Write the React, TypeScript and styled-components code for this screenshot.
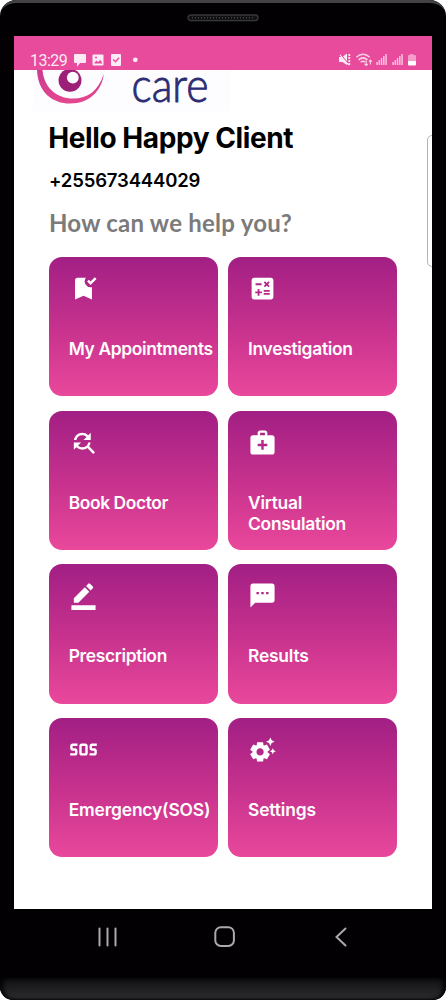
import React from 'react';
import styled, { createGlobalStyle } from 'styled-components';
import type { IconType } from 'react-icons';
import {
  MdBookmarkAdded,
  MdCalculate,
  MdFindReplace,
  MdMedicalServices,
  MdBorderColor,
  MdSms,
  MdSos,
  MdSettingsSuggest,
} from 'react-icons/md';

const GlobalStyle = createGlobalStyle`
  * { box-sizing: border-box; }
  body { margin: 0; background: #fff; font-family: Inter, "Liberation Sans", sans-serif; }
`;

const Phone = styled.div`
  width: 446px;
  height: 1000px;
  display: flex;
  flex-direction: column;
  background: #020003;
  border-radius: 16px 16px 13px 13px;
  overflow: hidden;
`;

const TopBezel = styled.div`
  height: 36px;
  flex: none;
  display: flex;
  justify-content: center;
  padding-top: 11px;
  border-top: 3px solid #434345;
  border-radius: 16px 16px 0 0;
`;

const Speaker = styled.svg`
  display: block;
`;

const Screen = styled.div`
  position: relative;
  width: 418px;
  height: 872.5px;
  margin-left: 14px;
  flex: none;
  background: #fff;
  overflow: hidden;
`;

const StatusBar = styled.div`
  height: 34px;
  background: #e84a9c;
  display: flex;
  justify-content: space-between;
  padding: 15px 14px 0 16px;
  color: #fff;
`;

const Clock = styled.span`
  font: 400 16px/19px Roboto, sans-serif;
  width: 43px;
  letter-spacing: -0.55px;
  color: #fdeaf4;
`;

const StatusGroup = styled.div`
  display: flex;
`;

const Logo = styled.svg`
  display: block;
  margin-left: 19px;
  overflow: visible;
`;

const Content = styled.main`
  padding: 0 35px;
`;

const Greeting = styled.h1`
  margin: 9.6px 0 0;
  font-size: 28px;
  line-height: 34px;
  font-weight: 700;
  letter-spacing: -0.42px;
  margin-left: -0.7px;
  color: #000;
`;

const PhoneNumber = styled.p`
  margin: 13.4px 0 0;
  font-size: 18.5px;
  line-height: 24px;
  font-weight: 600;
  letter-spacing: -0.15px;
  color: #000;
`;

const Question = styled.h2`
  margin: 16px 0 0;
  font: 700 24px/30px Lato, sans-serif;
  letter-spacing: 0.24px;
  color: #7b7b7b;
  white-space: nowrap;
`;

const Grid = styled.div`
  display: grid;
  grid-template-columns: 169px 169px;
  grid-auto-rows: 139.2px;
  gap: 14.4px 10.3px;
  margin-top: 19.3px;
`;

const Tile = styled.div`
  border-radius: 13px;
  padding: 17px 0 0 19.7px;
  color: #fff;
  background: linear-gradient(180deg, #a21f84 0%, #c6318d 50%, #e9489b 100%);
`;

const TileLabel = styled.div<{ $spacing: number }>`
  margin-top: 34.8px;
  font-size: 17.4px;
  line-height: 21.4px;
  font-weight: 600;
  letter-spacing: ${(p) => p.$spacing}px;
  white-space: pre-line;
`;

const TileIcon = styled.div`
  height: 29px;
  margin-left: -0.2px;
  svg { display: block; width: 29px; height: 29px; }
`;

const EdgePanel = styled.div`
  position: absolute;
  right: -6px;
  top: 99px;
  width: 11px;
  height: 132px;
  border: 1px solid #b4b4b4;
  border-radius: 5px;
`;

const NavBar = styled.nav`
  flex: 1;
  display: grid;
  grid-template-columns: 114px 117px 1fr;
  justify-items: start;
  column-gap: 4px;
  padding: 17px 0 0 96px;
`;

const Chin = styled.div`
  height: 22px;
  flex: none;
  border-radius: 3px 3px 13px 13px;
  background: linear-gradient(180deg, #0d0c0e, #1b1a1d 35%, #262528 75%, #29282b 90%, #111 100%);
  box-shadow: inset 5px 0 5px -2px #020003, inset -5px 0 5px -2px #020003;
`;

const tiles: { label: string; Icon: IconType; spacing: number }[] = [
  { label: 'My Appointments', Icon: MdBookmarkAdded, spacing: -0.34 },
  { label: 'Investigation', Icon: MdCalculate, spacing: -0.28 },
  { label: 'Book Doctor', Icon: MdFindReplace, spacing: -0.4 },
  { label: 'Virtual\nConsulation', Icon: MdMedicalServices, spacing: -0.25 },
  { label: 'Prescription', Icon: MdBorderColor, spacing: -0.32 },
  { label: 'Results', Icon: MdSms, spacing: -0.2 },
  { label: 'Emergency(SOS)', Icon: MdSos, spacing: -0.16 },
  { label: 'Settings', Icon: MdSettingsSuggest, spacing: -0.14 },
];

const Notifications = () => (
  <svg width="66" height="19" viewBox="0 0 66 19" fill="#fdeaf4">
    <path d="M2 3h10q1 0 1 1v7q0 1-1 1H7l-3 4v-4H2q-1 0-1-1V4q0-1 1-1z" />
    <rect x="19.5" y="3.5" width="11" height="11" rx="1" />
    <path d="M21 12.5l2.4-3 1.8 1.8 2-2.6 2.3 3.8z" fill="#e84a9c" />
    <circle cx="23" cy="6.5" r="1" fill="#e84a9c" />
    <rect x="38" y="3" width="10" height="12" rx="1" />
    <path d="M40.2 8.5l2.3 2.3 3.6-4" fill="none" stroke="#e84a9c" strokeWidth="1.4" />
    <circle cx="62.3" cy="8.8" r="2.4" />
  </svg>
);

const bars = [3, 5, 7, 9, 11];

const SystemIcons = () => (
  <svg width="80" height="19" viewBox="338 51 80 19" fill="#fdeaf4">
    <path d="M339 57h3.3l4.7-3.5v11.5L342.3 62H339z" />
    <path d="M340 54.5l9 10.5" stroke="#fdeaf4" strokeWidth="1.5" />
    <path d="M339.5 53l9 10.5" stroke="#e84a9c" strokeWidth="1" />
    <path d="M349.3 54v11" stroke="#fdeaf4" strokeWidth="1.8" strokeDasharray="2 1" />
    <g fill="none" stroke="#fbd3e7" strokeWidth="1.5">
      <path d="M356.3 57.3q6.7-6 13.4 0" />
      <path d="M358.6 59.9q4.4-4 8.8 0" />
      <path d="M360.7 62.3q2.3-2 4.6 0" />
      <path d="M366.2 60.5v5m-1.6-1.6l1.6 1.6 1.6-1.6M370.4 64.5v-4.5m-1.5 1.6l1.5-1.6 1.5 1.6" strokeWidth="1.1" />
    </g>
    {[376.3, 392.3].map((x) =>
      bars.map((h, i) => (
        <rect key={`${x}-${i}`} x={x + i * 2.25} y={65 - h} width="1.5" height={h} fill="#f9c3df" />
      )),
    )}
    <path d="M410 54h3v1h2q1 0 1 1v5h-8v-5q0-1 1-1h1z" fill="#f49dcb" />
    <path d="M408 61h8v3.5q0 1-1 1h-6q-1 0-1-1z" fill="#fff" />
  </svg>
);

export default function App() {
  return (
    <>
      <GlobalStyle />
      <Phone>
        <TopBezel>
          <Speaker width="72" height="8" viewBox="0 0 72 8">
            <rect x="1" y="1" width="70" height="5.6" rx="2.8" fill="#111" stroke="#39393b" strokeWidth="1.3" />
            <path d="M5 3.8h62" stroke="#444" strokeWidth="1.5" strokeDasharray="1 2" />
          </Speaker>
        </TopBezel>
        <Screen>
          <StatusBar>
            <StatusGroup>
              <Clock>13:29</Clock>
              <Notifications />
            </StatusGroup>
            <SystemIcons />
          </StatusBar>
          <Logo width="198" height="41" viewBox="33 70 198 41">
            <defs>
              <linearGradient id="lash" x1="0" x2="0" y1="0" y2="1">
                <stop offset="0" stopColor="#c93b91" />
                <stop offset="1" stopColor="#e5478f" />
              </linearGradient>
            </defs>
            <rect x="33" y="70" width="197" height="41" fill="#fdfcfe" />
            <path d="M37 70C38 93 53 103.5 70 103.5C90 103.5 102 90 103.8 74C98 91 88 98.5 73 98.5C57 98.5 44 88 42.5 70Z" fill="url(#lash)" />
            <path d="M65 70H75A11.5 11.5 0 1 1 65 70Z" fill="#9c2078" />
            <circle cx="72.8" cy="77.6" r="5.9" fill="#fff" />
            <text x="131.5" y="101.7" textLength="77" lengthAdjust="spacingAndGlyphs" fontFamily="Lato, sans-serif" fontWeight="300" fontSize="48" fill="#2c2c74" stroke="#2c2c74" strokeWidth="0.9" strokeLinejoin="round">
              care
            </text>
          </Logo>
          <Content>
            <Greeting>Hello Happy Client</Greeting>
            <PhoneNumber>+255673444029</PhoneNumber>
            <Question>How can we help you?</Question>
            <Grid>
              {tiles.map(({ label, Icon, spacing }) => (
                <Tile key={label}>
                  <TileIcon>
                    <Icon />
                  </TileIcon>
                  <TileLabel $spacing={spacing}>{label}</TileLabel>
                </Tile>
              ))}
            </Grid>
          </Content>
          <EdgePanel />
        </Screen>
        <NavBar>
          <svg width="23" height="22" viewBox="0 0 23 22" stroke="#aaa" strokeWidth="2" strokeLinecap="round">
            <path d="M3.5 2.5v17M11.5 2.5v17M19.5 2.5v17" />
          </svg>
          <svg width="22" height="22" viewBox="0 0 22 22" fill="none" stroke="#aaa" strokeWidth="2">
            <rect x="1.3" y="1.3" width="18.6" height="18.6" rx="5.5" />
          </svg>
          <svg width="14" height="22" viewBox="0 0 14 22" fill="none" stroke="#aaa" strokeWidth="2" strokeLinecap="round">
            <path d="M10.5 2.5L1.5 11l9 8.5" />
          </svg>
        </NavBar>
        <Chin />
      </Phone>
    </>
  );
}
